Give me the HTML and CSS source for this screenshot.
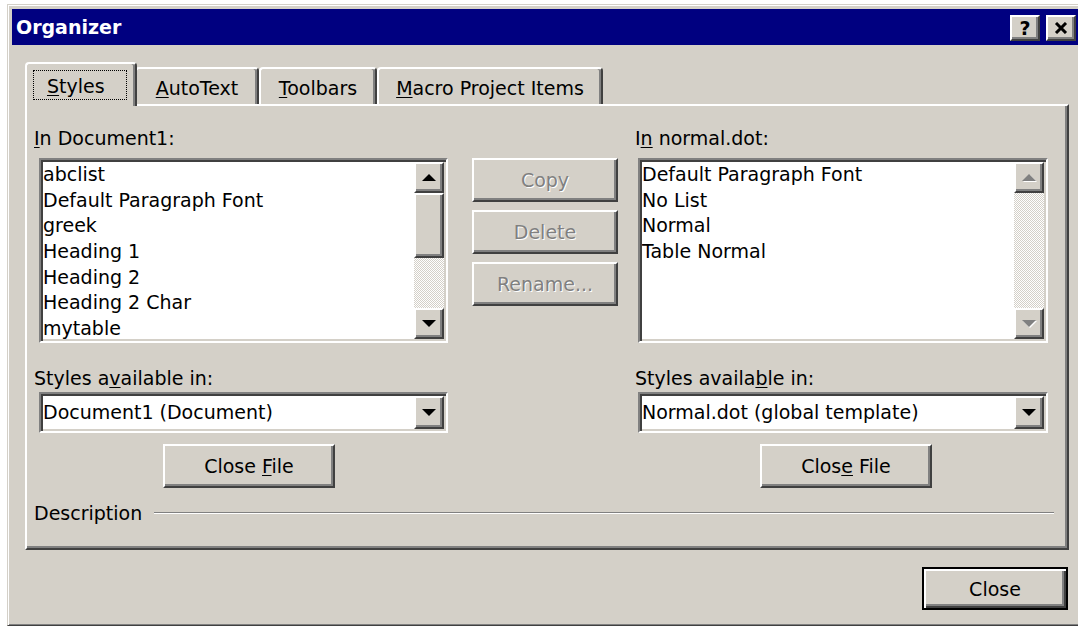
FILE: index.html
```html
<!DOCTYPE html>
<html>
<head>
<meta charset="utf-8">
<title>Organizer</title>
<link rel="stylesheet" href="styles.css">
</head>
<body>
<div class="window">
  <div class="titlebar">
    <span class="title">Organizer</span>
    <div class="caption-buttons">
      <button class="cap-btn raised help">?</button>
      <button class="cap-btn raised">
        <svg width="14" height="12" viewBox="0 0 14 12"><path d="M2 1 L12 11 M12 1 L2 11" stroke="#000" stroke-width="3" fill="none"/></svg>
      </button>
    </div>
  </div>

  <div class="client">
    <div class="tabs">
      <div class="tab selected"><span class="focus"><u>S</u>tyles</span></div>
      <div class="tab tab-autotext"><u>A</u>utoText</div>
      <div class="tab tab-toolbars"><u>T</u>oolbars</div>
      <div class="tab tab-macro"><u>M</u>acro Project Items</div>
    </div>

    <div class="panel">
      <div class="columns">
        <div class="col col-left">
          <div class="label first"><u>I</u>n Document1:</div>
          <div class="listbox sunken">
            <ul class="items">
              <li>abclist</li>
              <li>Default Paragraph Font</li>
              <li>greek</li>
              <li>Heading 1</li>
              <li>Heading 2</li>
              <li>Heading 2 Char</li>
              <li>mytable</li>
            </ul>
            <div class="vscroll">
              <div class="sb-btn raised"><span class="arrow up"></span></div>
              <div class="thumb raised"></div>
              <div class="track"></div>
              <div class="sb-btn raised"><span class="arrow down"></span></div>
            </div>
          </div>
          <div class="label second">Styles a<u>v</u>ailable in:</div>
          <div class="combo sunken">
            <span class="combo-text">Document1 (Document)</span>
            <div class="drop raised"><span class="arrow down"></span></div>
          </div>
          <button class="btn closefile cf-left">Close <u>F</u>ile</button>
        </div>

        <div class="col col-mid">
          <button class="btn" disabled>Copy</button>
          <button class="btn" disabled>Delete</button>
          <button class="btn" disabled>Rename...</button>
        </div>

        <div class="col col-right">
          <div class="label first">I<u>n</u> normal.dot:</div>
          <div class="listbox sunken">
            <ul class="items">
              <li>Default Paragraph Font</li>
              <li>No List</li>
              <li>Normal</li>
              <li>Table Normal</li>
            </ul>
            <div class="vscroll">
              <div class="sb-btn raised"><span class="arrow up off"></span></div>
              <div class="track"></div>
              <div class="sb-btn raised"><span class="arrow down off"></span></div>
            </div>
          </div>
          <div class="label second">Styles availa<u>b</u>le in:</div>
          <div class="combo sunken">
            <span class="combo-text">Normal.dot (global template)</span>
            <div class="drop raised"><span class="arrow down"></span></div>
          </div>
          <button class="btn closefile cf-right">Clos<u>e</u> File</button>
        </div>
      </div>

      <div class="description">
        <span>Description</span>
        <div class="etched"></div>
      </div>
    </div>

    <div class="footer">
      <button class="btn default">Close</button>
    </div>
  </div>
</div>
</body>
</html>
```

FILE: styles.css
```css
html, body {
  margin: 0;
  padding: 0;
  overflow: hidden;
  background: #fff;
}

body {
  width: 1078px;
  height: 626px;
  font-family: "DejaVu Sans", "Liberation Sans", sans-serif;
  font-size: 19px;
  color: #000;
}

u {
  text-decoration-thickness: 1px;
  text-underline-offset: 2px;
}

/* ---- 3D edges ---- */
.raised {
  box-sizing: border-box;
  background: #d4d0c8;
  border: 2px solid;
  border-color: #fff #404040 #404040 #fff;
  box-shadow: inset -2px -2px #808080;
}

.sunken {
  box-sizing: border-box;
  background: #fff;
  border: 2px solid;
  border-color: #808080 #fff #fff #808080;
  box-shadow: inset 2px 2px #404040, inset -2px -2px #d4d0c8;
  padding: 2px;
}

/* ---- window frame ---- */
.window {
  margin: 4px 0 0 7px;
  width: 1078px;
  height: 622px;
  box-sizing: border-box;
  background: #d4d0c8;
  border: 1px solid;
  border-color: #d4d0c8 #404040 #404040 #d4d0c8;
  box-shadow: inset 1px 1px #fff, inset -1px -1px #808080;
  padding: 4px;
  display: flex;
  flex-direction: column;
}

.titlebar {
  height: 36px;
  flex: none;
  background: #000080;
  color: #fff;
  display: flex;
  align-items: center;
  padding: 0 4px;
}

.title {
  flex: 1;
  font-weight: bold;
  line-height: 26px;
}

.caption-buttons {
  display: flex;
  gap: 6px;
  align-self: flex-start;
  margin-top: 6px;
}

.cap-btn {
  width: 30px;
  height: 26px;
  padding: 0;
  margin: 0;
  display: flex;
  align-items: center;
  justify-content: center;
  font-family: inherit;
  font-size: 19px;
  font-weight: bold;
  color: #000;
  line-height: 1;
}

/* ---- client area ---- */
.client {
  display: flex;
  flex-direction: column;
  padding-left: 13px;
}

.tabs {
  display: flex;
  align-items: flex-start;
  height: 42px;
  margin-top: 17px;
  padding-left: 2px;
}

.tab {
  box-sizing: border-box;
  height: 37px;
  margin-top: 5px;
  background: #d4d0c8;
  border: 2px solid;
  border-bottom: none;
  border-color: #fff #404040 transparent #fff;
  border-radius: 4px 4px 0 0;
  box-shadow: inset -2px 0 #808080;
  text-align: center;
  padding-top: 6px;
  line-height: 26px;
  white-space: nowrap;
}

.tab.selected {
  width: 112px;
  height: 44px;
  margin: 0 -2px;
  position: relative;
  z-index: 1;
  text-align: left;
  padding: 6px 0 0 6px;
}

.tab-autotext { width: 124px; }
.tab-toolbars { width: 118px; }
.tab-macro { width: 226px; }

.focus {
  display: block;
  box-sizing: border-box;
  width: 94px;
  height: 30px;
  border: 1px dotted #000;
  padding: 3px 0 0 13px;
  line-height: 25px;
}

.panel {
  box-sizing: border-box;
  width: 1044px;
  height: 446px;
  border-top: 2px solid #fff;
  border-left: 2px solid #fff;
  border-right: 2px solid #404040;
  border-bottom: 2px solid #404040;
  box-shadow: inset -2px -2px #808080;
  padding-left: 7px;
}

.columns {
  display: flex;
  align-items: flex-start;
}

.col {
  display: flex;
  flex-direction: column;
}

.col-left { width: 414px; }
.col-right { width: 413px; margin-left: 17px; }

.col-mid {
  width: 146px;
  margin-left: 24px;
  margin-top: 52px;
  gap: 8px;
}

.label {
  line-height: 26px;
  white-space: nowrap;
}

.label.first { margin-top: 19px; }
.label.second { margin-top: 22px; }

.listbox {
  height: 185px;
  margin-top: 7px;
  display: flex;
}

.col-left .listbox,
.col-left .combo { margin-left: 5px; }
.col-right .listbox,
.col-right .combo { margin-left: 3px; }

.items {
  flex: 1;
  list-style: none;
  margin: 0;
  padding: 0;
  overflow: hidden;
}

.items li {
  line-height: 25.67px;
  white-space: nowrap;
}

/* ---- scrollbars ---- */
.vscroll {
  width: 30px;
  flex: none;
  display: flex;
  flex-direction: column;
  background-color: #d4d0c8;
  background-image: conic-gradient(#fff 25%, #d4d0c8 0 50%, #fff 0 75%, #d4d0c8 0);
  background-size: 2px 2px;
}

.sb-btn {
  height: 31px;
  flex: none;
  display: flex;
  align-items: center;
  justify-content: center;
}

.thumb {
  height: 65px;
  flex: none;
}

.track { flex: 1; }

.arrow {
  width: 0;
  height: 0;
  border-left: 7px solid transparent;
  border-right: 7px solid transparent;
}

.arrow.up { border-bottom: 7px solid #000; }
.arrow.down { border-top: 7px solid #000; }

.arrow.off.up { border-bottom-color: #808080; filter: drop-shadow(1px 1px 0 #fff); }
.arrow.off.down { border-top-color: #808080; filter: drop-shadow(1px 1px 0 #fff); }

/* ---- combo boxes ---- */
.combo {
  height: 41px;
  margin-top: 1px;
  display: flex;
  align-items: stretch;
}

.combo-text {
  flex: 1;
  line-height: 33px;
  white-space: nowrap;
}

.drop {
  width: 30px;
  display: flex;
  align-items: center;
  justify-content: center;
}

/* ---- push buttons ---- */
.btn {
  box-sizing: border-box;
  height: 44px;
  margin: 0;
  padding: 0;
  font-family: inherit;
  font-size: 19px;
  color: #000;
  background: #d4d0c8;
  border: 2px solid;
  border-color: #fff #404040 #404040 #fff;
  box-shadow: inset -2px -2px #808080;
  line-height: 26px;
}

.btn:disabled {
  color: #808080;
  text-shadow: 1px 1px 0 #fff;
}

.closefile {
  width: 172px;
  margin-top: 11px;
  align-self: flex-start;
}

.cf-left { margin-left: 129px; }
.cf-right { margin-left: 125px; }

.description {
  display: flex;
  align-items: center;
  margin-top: 12px;
  height: 26px;
  line-height: 26px;
}

.etched {
  flex: 1;
  margin: 0 13px 0 12px;
  border-top: 1px solid #808080;
  border-bottom: 1px solid #fff;
}

.footer {
  width: 1044px;
  display: flex;
  justify-content: flex-end;
  margin-top: 17px;
}

.btn.default {
  width: 146px;
  height: 43px;
  margin-right: 1px;
  border: 2px solid #000;
  box-shadow: inset 2px 2px #fff, inset -2px -2px #404040, inset -4px -4px #808080;
}
```
